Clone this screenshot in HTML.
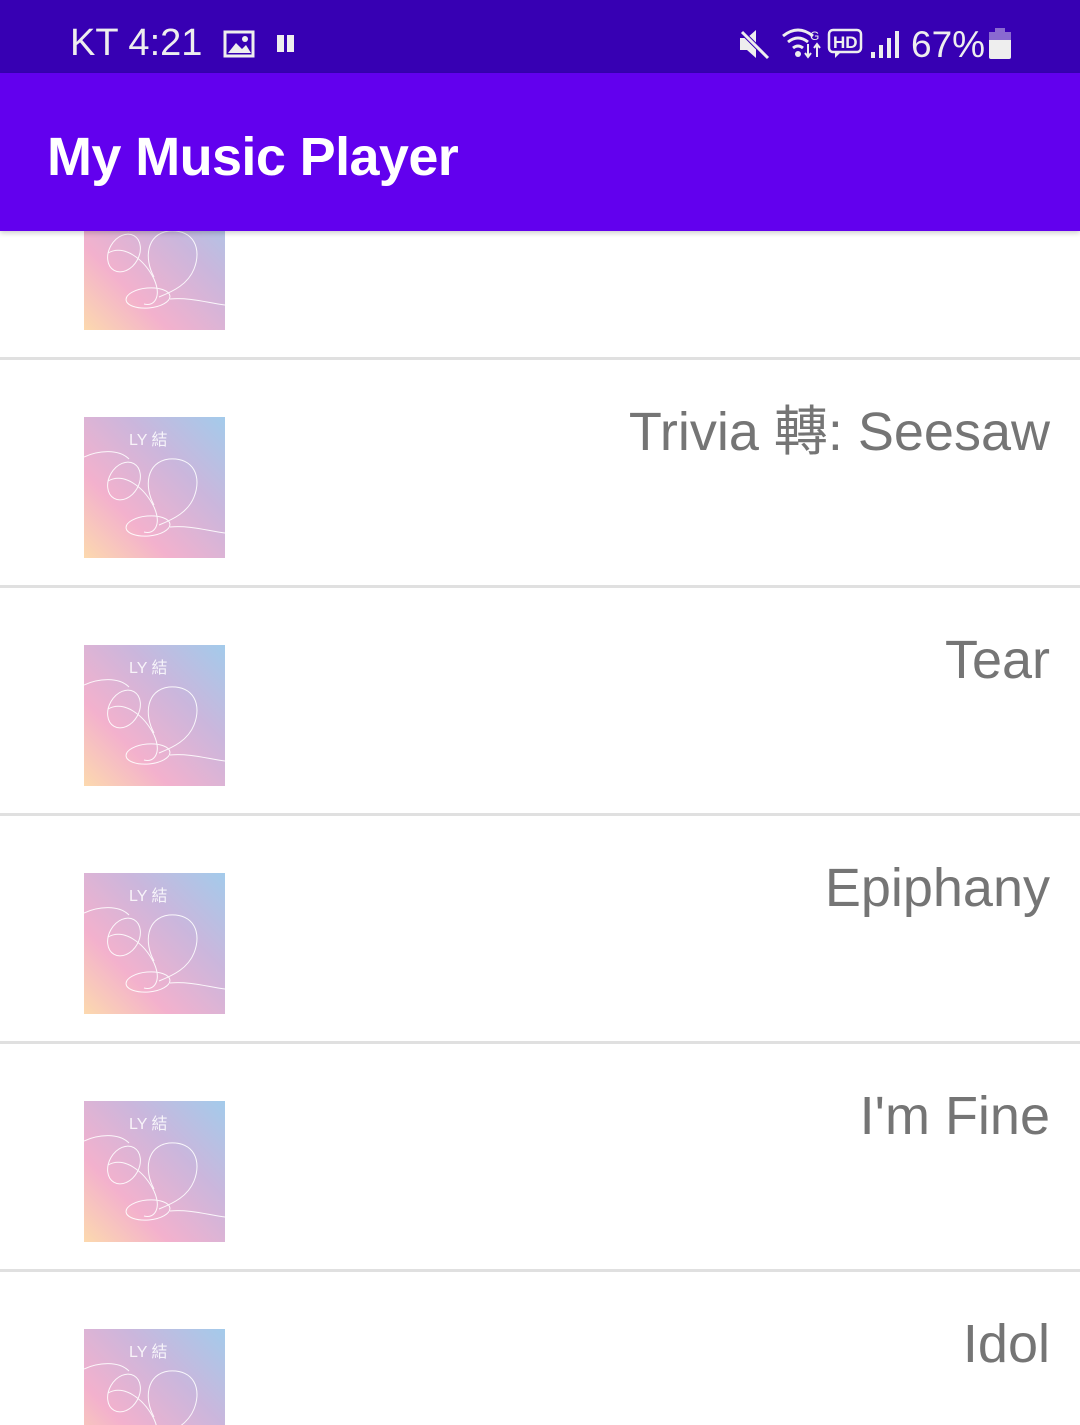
<!DOCTYPE html>
<html><head><meta charset="utf-8"><style>
*{margin:0;padding:0;box-sizing:border-box}
html,body{width:1080px;height:1425px;overflow:hidden}
body{background:#fff;font-family:"Liberation Sans","Noto Sans CJK TC",sans-serif;position:relative}
.sb{position:absolute;left:0;top:0;width:1080px;height:73px;background:#3700b3;color:#eee;font-size:38px}
.ab{position:absolute;left:0;top:73px;width:1080px;height:158px;background:#6200ee;box-shadow:0 2px 5px rgba(0,0,0,.2);z-index:2}
.ab h1{position:absolute;left:47px;top:57px;font-size:54px;font-weight:bold;color:#fff;letter-spacing:-0.6px;line-height:1}
.row{position:absolute;left:0;width:1080px;height:228px;border-bottom:3px solid #e0e0e0}
.art{position:absolute;left:84px;width:141px;height:141px}
.t{position:absolute;right:30px;font-size:54px;color:#757575;line-height:1;white-space:nowrap}
</style></head><body>
<svg width="0" height="0" style="position:absolute">
<defs>
<linearGradient id="g" x1="0" y1="1" x2="1" y2="0">
<stop offset="0" stop-color="#fcd9ae"/><stop offset=".3" stop-color="#f3b1cd"/><stop offset=".65" stop-color="#cbb6dc"/><stop offset="1" stop-color="#a3cbeb"/>
</linearGradient>
<symbol id="a" viewBox="0 0 141 141">
<rect width="141" height="141" fill="url(#g)"/>
<text x="45" y="28" font-size="16" fill="#fff" font-family="Liberation Sans,Noto Sans CJK TC,sans-serif" opacity=".85">LY 結</text>
<g fill="none" stroke="#fff" stroke-width="1" opacity=".9">
<path d="M0 40 C15 33 35 32 45 42"/>
<ellipse cx="40" cy="64" rx="20" ry="15" transform="rotate(-60 40 64)"/>
<path d="M24 64 C40 55 60 70 70 90 C78 108 70 118 60 115"/>
<path d="M70 88 C60 70 62 45 85 42 C110 40 118 60 110 80 C104 95 90 102 75 108"/>
<ellipse cx="64" cy="109" rx="22" ry="10" transform="rotate(-5 64 109)"/>
<path d="M86 110 C105 108 125 114 141 116"/>
</g>
</symbol>
</defs></svg>
<div class="sb">
<span style="position:absolute;left:70px;top:24px;line-height:1">KT 4:21</span>
<svg style="position:absolute;left:223px;top:30px" width="32" height="28"><rect x="2" y="2" width="28" height="24" fill="none" stroke="#eee" stroke-width="3"/><path d="M5 23 L13 13 L19 19 L23 15 L28 23Z" fill="#eee"/><circle cx="22" cy="9" r="3" fill="#eee"/></svg>
<div style="position:absolute;left:277px;top:35px;width:7px;height:17px;background:#eee"></div><div style="position:absolute;left:287px;top:35px;width:7px;height:17px;background:#eee"></div>
<svg style="position:absolute;left:738px;top:28px" width="34" height="32"><path d="M2 10 H9 L18 2 V30 L9 22 H2Z" fill="#eee"/><path d="M4 4 L30 30" stroke="#3700b3" stroke-width="5"/><path d="M4 4 L30 30" stroke="#eee" stroke-width="3"/></svg>
<svg style="position:absolute;left:780px;top:26px" width="45" height="34"><path d="M3 10 Q18 -2 33 10" stroke="#eee" stroke-width="3" fill="none"/><path d="M8 16 Q18 8 28 16" stroke="#eee" stroke-width="3" fill="none"/><path d="M13 22 Q18 18 23 22" stroke="#eee" stroke-width="3" fill="none"/><circle cx="18" cy="28" r="3" fill="#eee"/><text x="30" y="14" font-size="12" fill="#eee" font-family="Liberation Sans">G</text><path d="M28 18 V30 M25 27 L28 31 L31 27 M37 31 V19 M34 22 L37 18 L40 22" stroke="#eee" stroke-width="2" fill="none"/></svg>
<svg style="position:absolute;left:827px;top:28px" width="36" height="32"><rect x="2" y="2" width="32" height="22" rx="4" fill="none" stroke="#eee" stroke-width="2.5"/><path d="M8 24 V30 L14 24" fill="#eee"/><text x="6" y="20" font-size="17" font-weight="bold" fill="#eee" font-family="Liberation Sans">HD</text></svg>
<svg style="position:absolute;left:870px;top:30px" width="30" height="30"><rect x="1" y="22" width="4" height="6" fill="#eee"/><rect x="9" y="15" width="4" height="13" fill="#eee"/><rect x="17" y="8" width="4" height="20" fill="#eee"/><rect x="25" y="1" width="4" height="27" fill="#eee"/></svg>
<span style="position:absolute;left:911px;top:26px;line-height:1;font-size:37px">67%</span>
<div style="position:absolute;left:989px;top:32px;width:22px;height:27px;background:#eee;border-radius:2px"></div>
<div style="position:absolute;left:989px;top:32px;width:22px;height:8px;background:#8a6ad0"></div>
<div style="position:absolute;left:995px;top:28px;width:10px;height:5px;background:#8a6ad0"></div>
</div>
<div class="ab"><h1>My Music Player</h1></div>
<div class="row" style="top:132px"><svg class="art" style="top:57px"><use href="#a"/></svg></div>
<div class="row" style="top:360px"><svg class="art" style="top:57px"><use href="#a"/></svg><div class="t" style="top:45px">Trivia 轉: Seesaw</div></div>
<div class="row" style="top:588px"><svg class="art" style="top:57px"><use href="#a"/></svg><div class="t" style="top:45px">Tear</div></div>
<div class="row" style="top:816px"><svg class="art" style="top:57px"><use href="#a"/></svg><div class="t" style="top:45px">Epiphany</div></div>
<div class="row" style="top:1044px"><svg class="art" style="top:57px"><use href="#a"/></svg><div class="t" style="top:45px">I'm Fine</div></div>
<div class="row" style="top:1272px"><svg class="art" style="top:57px"><use href="#a"/></svg><div class="t" style="top:45px">Idol</div></div>
</body></html>
